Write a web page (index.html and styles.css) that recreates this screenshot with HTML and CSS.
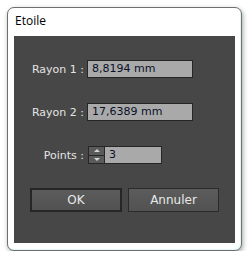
FILE: index.html
```html
<!DOCTYPE html>
<html>
  <head>
    <meta charset="UTF-8" />
    <title>Etoile</title>
    <link rel="stylesheet" href="styles.css">
  </head>
  <body>
    <div class="window">
      <div class="titlebar">Etoile</div>
      <div class="panel">
        <div class="row">
          <span class="label">Rayon 1 :</span>
          <div class="field">8,8194 mm</div>
        </div>
        <div class="row">
          <span class="label">Rayon 2 :</span>
          <div class="field">17,6389 mm</div>
        </div>
        <div class="row">
          <span class="label points-label">Points :</span>
          <div class="spin">
            <span class="half"><span class="arrow up"></span></span>
            <span class="half"><span class="arrow down"></span></span>
          </div>
          <div class="field small">3</div>
        </div>
        <div class="buttons">
          <button type="button" class="btn default">OK</button>
          <button type="button" class="btn">Annuler</button>
        </div>
      </div>
    </div>
  </body>
</html>
```

FILE: styles.css
```css
html {
  height: 100%;
}
body {
  margin: 0;
  background-color: #ffffff;
  font-family: "DejaVu Sans", sans-serif;
}
.window {
  margin: 7px 0 0 7px;
  width: 233px;
  height: 242px;
  border: 1px solid #6f6f6f;
  border-radius: 7px;
  background-color: #ffffff;
  box-shadow: 1px 2px 5px rgba(0, 0, 0, 0.35), inset -1px -1px 0 #dff8fa;
  display: flex;
  flex-direction: column;
}
.titlebar {
  height: 28px;
  padding-left: 7px;
  line-height: 25px;
  font-family: "Open Sans", sans-serif;
  font-size: 12px;
  color: #000000;
}
.panel {
  margin: 0 6px 0 6px;
  height: 207px;
  background-color: #474747;
  box-sizing: border-box;
  padding-top: 24px;
  display: flex;
  flex-direction: column;
  gap: 25px;
  font-size: 11px;
}
.row {
  display: flex;
  align-items: center;
  height: 18px;
}
.label {
  width: 70px;
  text-align: right;
  margin-right: 3px;
  color: #e4e4e4;
}
.points-label {
  margin-right: 4px;
}
.field {
  width: 100px;
  height: 16px;
  line-height: 16px;
  border: 1px solid #262626;
  background-color: #a9a9a9;
  color: #0a1028;
  padding-left: 4px;
  box-sizing: content-box;
}
.field.small {
  width: 52px;
}
.spin {
  width: 15px;
  height: 16px;
  border: 1px solid #262626;
  border-right: 0;
  background-color: #262626;
  display: flex;
  flex-direction: column;
  gap: 1px;
  box-sizing: content-box;
}
.half {
  flex: 1;
  background-color: #5a5a5a;
  display: flex;
  align-items: center;
  justify-content: center;
}
.arrow {
  width: 0;
  height: 0;
  border-left: 3px solid transparent;
  border-right: 3px solid transparent;
}
.arrow.up {
  border-bottom: 3px solid #d4d4d4;
}
.arrow.down {
  border-top: 3px solid #d4d4d4;
}
.buttons {
  display: flex;
  gap: 6px;
  margin-left: 16px;
  margin-top: -1px;
}
.btn {
  width: 91px;
  height: 24px;
  border: 1px solid #2a2a2a;
  background: linear-gradient(#5c5c5c, #525252);
  color: #e8e8e8;
  font-family: "DejaVu Sans", sans-serif;
  font-size: 12px;
  padding: 0;
}
.btn.default {
  border: 2px solid #262626;
  width: 92px;
}
```
